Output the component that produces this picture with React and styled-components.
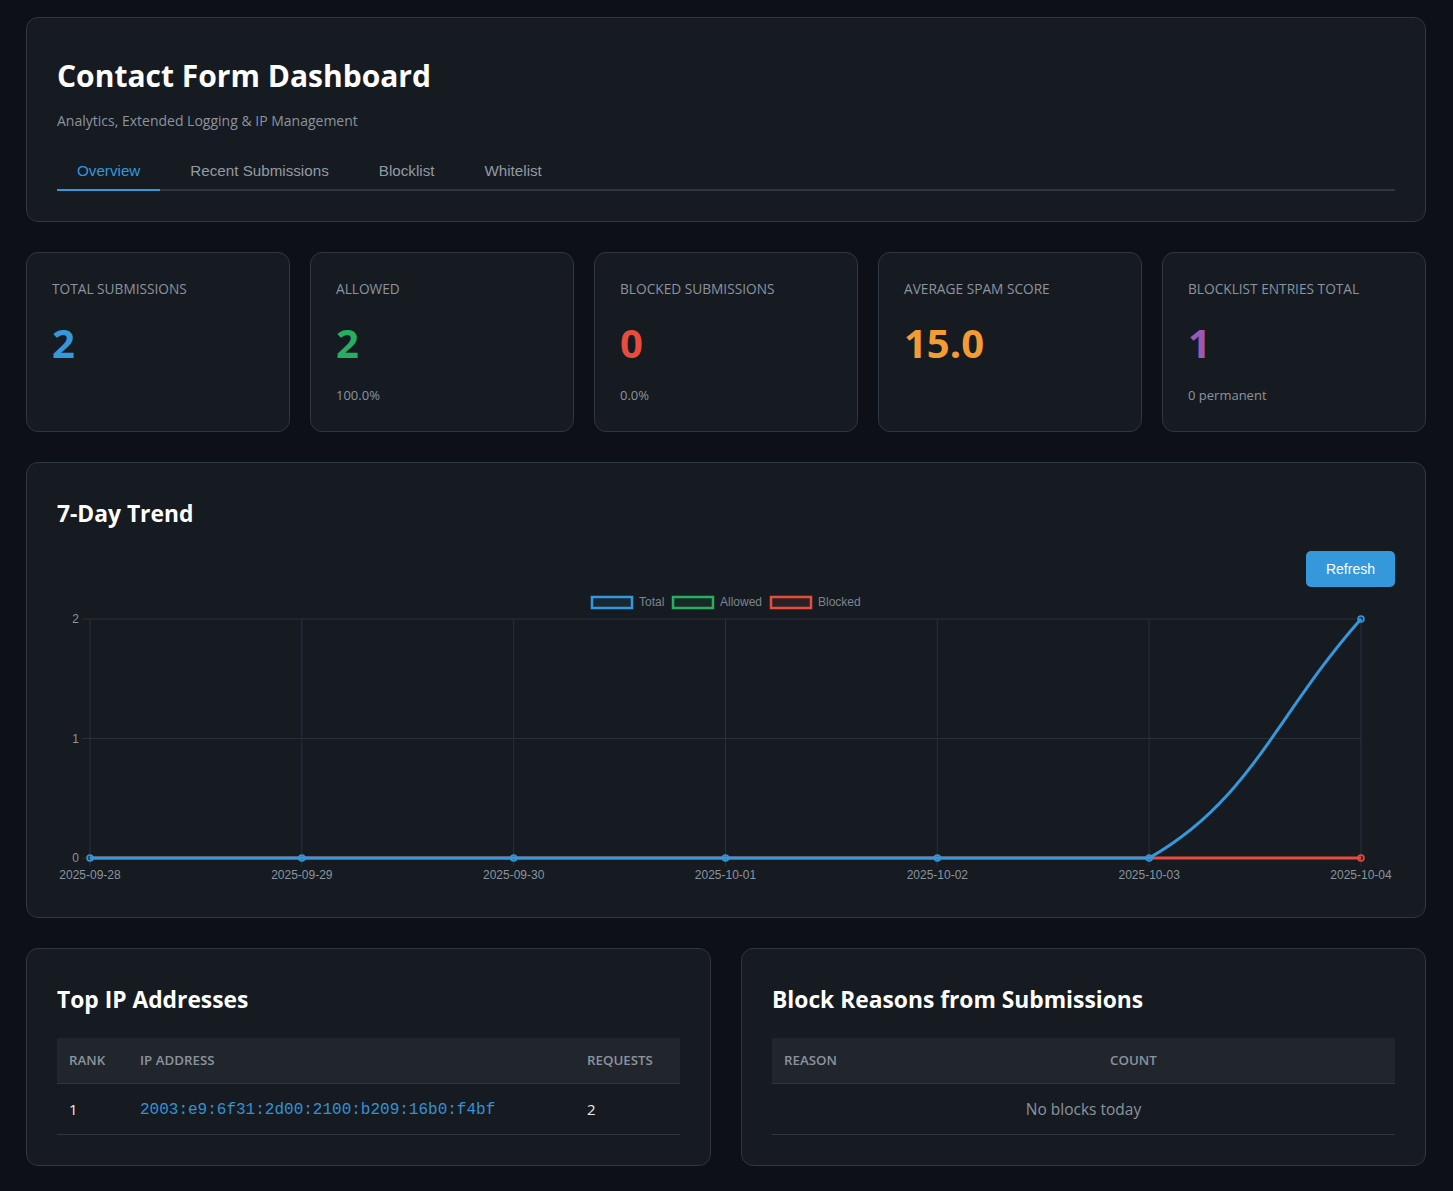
import React, { useState } from "react";
import styled, { createGlobalStyle } from "styled-components";

const GlobalStyle = createGlobalStyle`
  * { box-sizing: border-box; }
  body {
    margin: 0;
    background: #0d1117;
    color: #e6edf3;
    font-family: "Open Sans", "Noto Sans", sans-serif;
  }
`;

const Page = styled.div`
  padding: 17px 27px 26px 26px;
  display: flex;
  flex-direction: column;
  gap: 30px;
`;

const Card = styled.section`
  background: #161b22;
  border: 1px solid #30363d;
  border-radius: 12px;
  padding: 30px;
`;

const Title = styled.h1`
  margin: 10px 0 0;
  font-size: 30px;
  font-weight: 700;
  color: #ffffff;
  line-height: 36px;
`;

const Subtitle = styled.p`
  margin: 17px 0 22px;
  font-size: 14px;
  line-height: 19px;
  color: #8b949e;
`;

const TabBar = styled.nav`
  display: flex;
  gap: 10px;
  border-bottom: 2px solid #30363d;
`;

const Tab = styled.button`
  background: none;
  border: none;
  border-bottom: 2px solid ${(p) => (p.$active ? "#3498db" : "transparent")};
  margin-bottom: -2px;
  padding: 10px 20px;
  font-family: "Liberation Sans", Arial, sans-serif;
  font-size: 15.2px;
  line-height: 17px;
  color: ${(p) => (p.$active ? "#3498db" : "#939aa2")};
  cursor: pointer;
`;

const StatsGrid = styled.div`
  display: grid;
  grid-template-columns: repeat(5, 1fr);
  gap: 20px;
`;

const StatCard = styled(Card)`
  height: 180px;
  padding: 27px 25px;
`;

const StatLabel = styled.div`
  font-size: 13.7px;
  color: #8b949e;
  text-transform: uppercase;
  line-height: 18px;
`;

const StatValue = styled.div`
  margin-top: 22px;
  font-size: 40px;
  font-weight: 700;
  line-height: 46px;
  color: ${(p) => p.$color};
`;

const StatSub = styled.div`
  margin-top: 20px;
  font-size: 13px;
  color: #8b949e;
`;

const SectionTitle = styled.h2`
  margin: 6px 0 0;
  font-size: 22.8px;
  font-weight: 700;
  color: #ffffff;
  line-height: 30px;
`;

const ChartHead = styled.div`
  display: flex;
  justify-content: flex-end;
  margin-top: 22px;
`;

const RefreshButton = styled.button`
  background: #3498db;
  color: #ffffff;
  border: none;
  border-radius: 5px;
  padding: 0 20px;
  height: 36px;
  font-family: "Liberation Sans", Arial, sans-serif;
  font-size: 14px;
  cursor: pointer;
`;

const ChartBox = styled.div`
  margin-top: 5px;
  height: 295px;
`;

const BottomGrid = styled.div`
  display: grid;
  grid-template-columns: 1fr 1fr;
  gap: 30px;
`;

const Table = styled.table`
  width: 100%;
  margin-top: 23px;
  border-collapse: collapse;
`;

const Th = styled.th`
  background: #21262d;
  color: #8b949e;
  font-size: 13.3px;
  font-weight: 600;
  text-transform: uppercase;
  text-align: left;
  padding: 0 12px;
  height: 45px;
  border-bottom: 1px solid #30363d;
  width: ${(p) => p.$w || "auto"};
`;

const Td = styled.td`
  padding: 0 12px;
  height: 51px;
  font-size: ${(p) => (p.$muted ? "15.5px" : "15px")};
  color: ${(p) => (p.$muted ? "#8b949e" : "#e6edf3")};
  text-align: ${(p) => (p.$center ? "center" : "left")};
  border-bottom: 1px solid #30363d;
`;

const IpCode = styled.code`
  font-family: "Liberation Mono", "Courier New", monospace;
  font-size: 16px;
  color: #3591d4;
`;

const stats = [
  { label: "Total Submissions", value: "2", color: "#3498db" },
  { label: "Allowed", value: "2", color: "#27ae60", sub: "100.0%" },
  { label: "Blocked Submissions", value: "0", color: "#e74c3c", sub: "0.0%" },
  { label: "Average Spam Score", value: "15.0", color: "#f39c33" },
  { label: "Blocklist Entries Total", value: "1", color: "#9b59b6", sub: "0 permanent" },
];

const days = ["2025-09-28", "2025-09-29", "2025-09-30", "2025-10-01", "2025-10-02", "2025-10-03", "2025-10-04"];

// chart geometry (svg coords)
const X0 = 33;
const X1 = 1304;
const Y0 = 266; // value 0
const Y2 = 27; // value 2
const step = (X1 - X0) / 6;
const xs = days.map((_, i) => X0 + i * step);
const yOf = (v) => Y0 - ((Y0 - Y2) * v) / 2;

const TrendChart = () => {
  const grid = "#2a3038";
  const curve = `M ${xs[0]} ${Y0} L ${xs[5]} ${Y0} C ${xs[5] + 102} ${208}, ${X1 - 85} ${122.6}, ${X1} ${Y2}`;
  const legend = [
    { x: 534, label: "Total", color: "#3498db", fill: "rgba(52,152,219,0.1)" },
    { x: 615, label: "Allowed", color: "#27ae60", fill: "rgba(39,174,96,0.1)" },
    { x: 713, label: "Blocked", color: "#e74c3c", fill: "rgba(231,76,60,0.1)" },
  ];
  return (
    <svg width="100%" height="295" viewBox="0 0 1338 295">
      {legend.map((l) => (
        <g key={l.label}>
          <rect x={l.x + 1} y={5} width={40} height={11} fill={l.fill} stroke={l.color} strokeWidth="2.5" />
          <text x={l.x + 48} y={14} fontSize="12" fill="#7d848c" fontFamily="Liberation Sans, Arial, sans-serif">
            {l.label}
          </text>
        </g>
      ))}
      {[0, 1, 2].map((v) => (
        <g key={v}>
          <line x1={X0 - 8} x2={X1} y1={yOf(v)} y2={yOf(v)} stroke={grid} strokeWidth="1" />
          <text x={X0 - 11} y={yOf(v) + 4} fontSize="12" fill="#8b949e" textAnchor="end" fontFamily="Liberation Sans, Arial, sans-serif">
            {v}
          </text>
        </g>
      ))}
      {xs.map((x, i) => (
        <g key={i}>
          <line x1={x} x2={x} y1={Y2} y2={Y0 + 8} stroke={grid} strokeWidth="1" />
          <text x={x} y={287} fontSize="12" fill="#8b949e" textAnchor="middle" fontFamily="Liberation Sans, Arial, sans-serif">
            {days[i]}
          </text>
        </g>
      ))}
      <line x1={X0} x2={X1} y1={Y0} y2={Y0} stroke="#e74c3c" strokeWidth="3" />
      <circle cx={X1} cy={Y0} r="3" fill="rgba(231,76,60,0.2)" stroke="#e74c3c" strokeWidth="1.5" />
      <path d={curve} fill="none" stroke="#3498db" strokeWidth="3" />
      {xs.map((x, i) => (
        <circle key={i} cx={x} cy={i === 6 ? Y2 : Y0} r="3" fill="rgba(52,152,219,0.3)" stroke="#3498db" strokeWidth="1.5" />
      ))}
    </svg>
  );
};

const tabs = ["Overview", "Recent Submissions", "Blocklist", "Whitelist"];

export default function App() {
  const [active, setActive] = useState("Overview");
  return (
    <>
      <GlobalStyle />
      <Page>
        <Card>
          <Title>Contact Form Dashboard</Title>
          <Subtitle>Analytics, Extended Logging &amp; IP Management</Subtitle>
          <TabBar>
            {tabs.map((t) => (
              <Tab key={t} $active={t === active} onClick={() => setActive(t)}>
                {t}
              </Tab>
            ))}
          </TabBar>
        </Card>

        <StatsGrid>
          {stats.map((s) => (
            <StatCard key={s.label}>
              <StatLabel>{s.label}</StatLabel>
              <StatValue $color={s.color}>{s.value}</StatValue>
              {s.sub && <StatSub>{s.sub}</StatSub>}
            </StatCard>
          ))}
        </StatsGrid>

        <Card>
          <SectionTitle>7-Day Trend</SectionTitle>
          <ChartHead>
            <RefreshButton>Refresh</RefreshButton>
          </ChartHead>
          <ChartBox>
            <TrendChart />
          </ChartBox>
        </Card>

        <BottomGrid>
          <Card>
            <SectionTitle>Top IP Addresses</SectionTitle>
            <Table>
              <thead>
                <tr>
                  <Th $w="71px">Rank</Th>
                  <Th>IP Address</Th>
                  <Th $w="105px">Requests</Th>
                </tr>
              </thead>
              <tbody>
                <tr>
                  <Td>1</Td>
                  <Td>
                    <IpCode>2003:e9:6f31:2d00:2100:b209:16b0:f4bf</IpCode>
                  </Td>
                  <Td>2</Td>
                </tr>
              </tbody>
            </Table>
          </Card>
          <Card>
            <SectionTitle>Block Reasons from Submissions</SectionTitle>
            <Table>
              <thead>
                <tr>
                  <Th $w="326px">Reason</Th>
                  <Th>Count</Th>
                </tr>
              </thead>
              <tbody>
                <tr>
                  <Td colSpan={2} $center $muted>
                    No blocks today
                  </Td>
                </tr>
              </tbody>
            </Table>
          </Card>
        </BottomGrid>
      </Page>
    </>
  );
}
